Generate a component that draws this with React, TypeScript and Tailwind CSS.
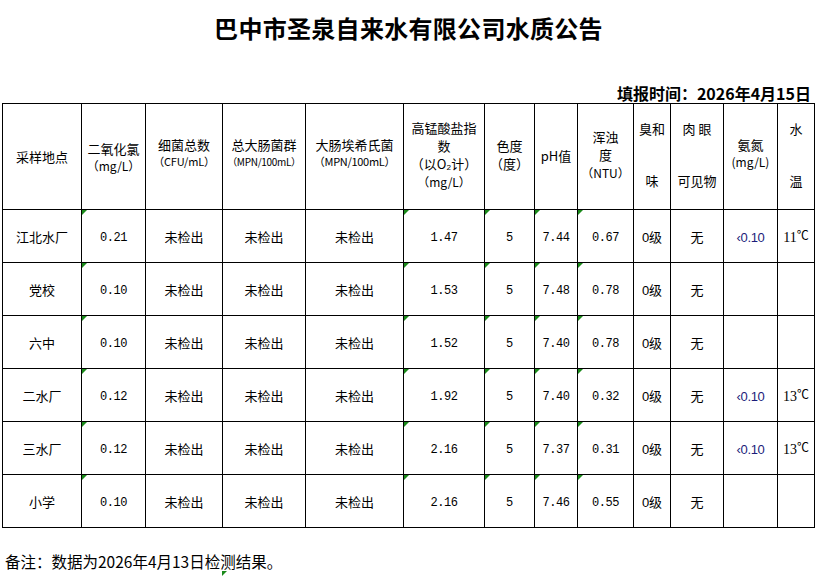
const cjk = "font-['SimSun','Noto_Sans_CJK_SC',sans-serif]";
const num = "font-['Liberation_Mono','Noto_Sans_CJK_SC',monospace] text-[12px] tracking-[-0.4px]";

const colWidths = [79, 64, 77, 83, 98, 81, 50, 43, 56, 37, 53, 54, 37];
// columns that carry excel's green "number stored as text" marker
const marked = [1, 5, 6, 7, 8];

type Row = {
  site: string;
  clo2: string;
  cod: string;
  color: string;
  ph: string;
  ntu: string;
  nh3: string;
  temp: string;
};

const rows: Row[] = [
  { site: "江北水厂", clo2: "0.21", cod: "1.47", color: "5", ph: "7.44", ntu: "0.67", nh3: "<0.10", temp: "11" },
  { site: "党校", clo2: "0.10", cod: "1.53", color: "5", ph: "7.48", ntu: "0.78", nh3: "", temp: "" },
  { site: "六中", clo2: "0.10", cod: "1.52", color: "5", ph: "7.40", ntu: "0.78", nh3: "", temp: "" },
  { site: "二水厂", clo2: "0.12", cod: "1.92", color: "5", ph: "7.40", ntu: "0.32", nh3: "<0.10", temp: "13" },
  { site: "三水厂", clo2: "0.12", cod: "2.16", color: "5", ph: "7.37", ntu: "0.31", nh3: "<0.10", temp: "13" },
  { site: "小学", clo2: "0.10", cod: "2.16", color: "5", ph: "7.46", ntu: "0.55", nh3: "", temp: "" },
];

function Marker() {
  return (
    <span className="absolute left-0 top-0 w-0 h-0 border-t-[5px] border-r-[5px] border-t-[#1a8a1a] border-r-transparent" />
  );
}

function Th({ children, className = "" }: { children: React.ReactNode; className?: string }) {
  return (
    <th className={`border border-black p-0 align-middle text-center font-normal text-[13px] leading-[17px] text-black ${className}`}>
      {children}
    </th>
  );
}

export default function App() {
  return (
    <div className={`w-[833px] h-[576px] bg-white text-black overflow-hidden ${cjk}`}>
      <div className="ml-[2px] w-[813px]">
        <div className="h-[103px] flex flex-col">
          <h1 className="pt-[13px] text-center text-[24px] leading-[30px] font-bold tracking-[0.3px]">
            巴中市圣泉自来水有限公司水质公告
          </h1>
          <div className="mt-auto pr-[4px] text-right text-[16px] leading-[20px] font-bold">
            填报时间：2026年4月15日
          </div>
        </div>

        <table className="table-fixed border-collapse w-[813px]">
          <colgroup>
            {colWidths.map((w, i) => (
              <col key={i} style={{ width: w }} />
            ))}
          </colgroup>
          <thead>
            <tr className="h-[106px]">
              <Th>采样地点</Th>
              <Th>
                <div>二氧化氯</div>
                <div className="text-[12px]">（mg/L）</div>
              </Th>
              <Th className="pb-[8px]">
                <div>细菌总数</div>
                <div className="text-[11px] tracking-[-0.2px]">（CFU/mL）</div>
              </Th>
              <Th className="pb-[8px] text-[11px]">
                <div>总大肠菌群</div>
                <div className="text-[10px] tracking-[-0.3px]">（MPN/100mL）</div>
              </Th>
              <Th className="pb-[8px]">
                <div>大肠埃希氏菌</div>
                <div className="text-[11px] tracking-[-0.3px]">（MPN/100mL）</div>
              </Th>
              <Th className="pb-[4px] leading-[18px]">
                <div>高锰酸盐指</div>
                <div>数</div>
                <div>（以O₂计）</div>
                <div className="text-[12px]">（mg/L）</div>
              </Th>
              <Th className="pb-[4px] leading-[18px]">
                <div>色度</div>
                <div>（度）</div>
              </Th>
              <Th className="pb-[2px]">pH值</Th>
              <Th className="pb-[4px] leading-[18px]">
                <div>浑浊</div>
                <div>度</div>
                <div className="text-[12px]">（NTU）</div>
              </Th>
              <Th className="pb-[4px]">
                <div>臭和</div>
                <div className="mt-[35px]">味</div>
              </Th>
              <Th className="pb-[4px]">
                <div>肉 眼</div>
                <div className="mt-[35px]">可见物</div>
              </Th>
              <Th className="pb-[8px]">
                <div>氨氮</div>
                <div className="text-[12px]">(mg/L)</div>
              </Th>
              <Th className="pb-[4px]">
                <div>水</div>
                <div className="mt-[35px]">温</div>
              </Th>
            </tr>
          </thead>
          <tbody>
            {rows.map((r) => {
              const cells: React.ReactNode[] = [
                <span className="text-[13px]">{r.site}</span>,
                <span className={num}>{r.clo2}</span>,
                <span className="text-[13px]">未检出</span>,
                <span className="text-[13px]">未检出</span>,
                <span className="text-[13px]">未检出</span>,
                <span className={num}>{r.cod}</span>,
                <span className={num}>{r.color}</span>,
                <span className={num}>{r.ph}</span>,
                <span className={num}>{r.ntu}</span>,
                <span className="text-[13px]">
                  <span className="font-['Liberation_Sans',sans-serif]">0</span>级
                </span>,
                <span className="text-[13px]">无</span>,
                r.nh3 ? (
                  <span className="font-['Liberation_Sans',sans-serif] text-[13px] text-[#1c1c7a] tracking-[-0.3px]">
                    ‹0.10
                  </span>
                ) : null,
                r.temp ? (
                  <span className="text-[13px]">
                    <span className="font-['Liberation_Serif',serif] text-[14px]">{r.temp}</span>
                    <span className="text-[12px] relative top-[-2px]">℃</span>
                  </span>
                ) : null,
              ];
              return (
                <tr key={r.site} className="h-[53px]">
                  {cells.map((c, i) => (
                    <td
                      key={i}
                      className="relative border border-black p-0 text-center align-middle leading-[16px]"
                    >
                      {marked.includes(i) && <Marker />}
                      {c}
                    </td>
                  ))}
                </tr>
              );
            })}
          </tbody>
        </table>

        <div className="relative mt-[23px] pl-[3px] text-[15.5px] leading-[20px]">
          备注：数据为2026年4月13日检测结果。
          <span className="absolute left-[220px] top-[20px] w-0 h-0 border-t-[5px] border-r-[5px] border-t-[#1a8a1a] border-r-transparent" />
        </div>
      </div>
    </div>
  );
}
